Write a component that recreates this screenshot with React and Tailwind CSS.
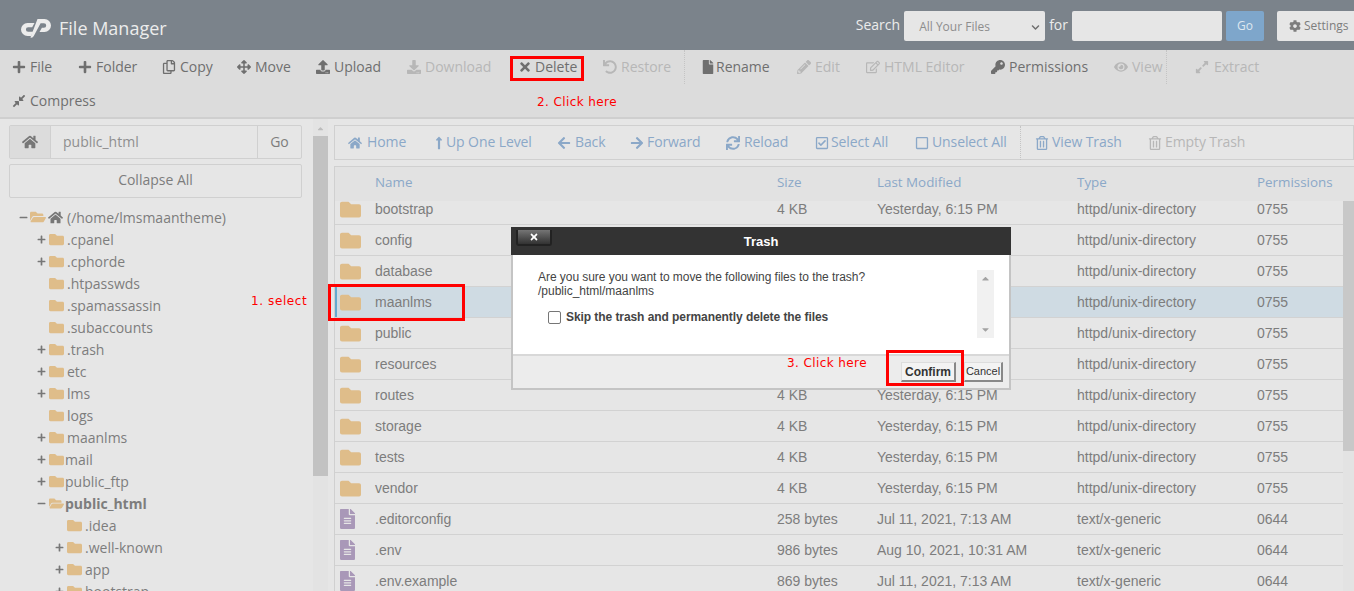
import React from "react";
import {
  FaPlus, FaMinus, FaRegCopy, FaArrowsAlt, FaUpload, FaDownload, FaTimes, FaUndo, FaFile, FaPencilAlt,
  FaRegEdit, FaKey, FaEye, FaExpandAlt, FaCompressAlt, FaHome, FaLongArrowAltUp, FaArrowLeft, FaArrowRight,
  FaSync, FaRegCheckSquare, FaRegSquare, FaRegTrashAlt, FaCog, FaFolder, FaFolderOpen, FaFileAlt,
  FaChevronDown, FaCaretUp, FaCaretDown,
} from "react-icons/fa";

const topActions = [
  { icon: FaPlus, label: "File", w: "w-[66px]" },
  { icon: FaPlus, label: "Folder", w: "w-[84px]" },
  { icon: FaRegCopy, label: "Copy", w: "w-[75px]" },
  { icon: FaArrowsAlt, label: "Move", w: "w-[79px]" },
  { icon: FaUpload, label: "Upload", w: "w-[91px]" },
  { icon: FaDownload, label: "Download", off: true, w: "w-[111px]" },
  { icon: FaTimes, label: "Delete", w: "w-[85px]", gap: "gap-[3px]" },
  { icon: FaUndo, label: "Restore", off: true, w: "w-[81px]" },
  { sep: true, gap: "mr-[16px]" },
  { icon: FaFile, label: "Rename", w: "w-[96px]", gap: "gap-px" },
  { icon: FaPencilAlt, label: "Edit", w: "w-[69px]", off: true },
  { icon: FaRegEdit, label: "HTML Editor", w: "w-[125px]", off: true },
  { icon: FaKey, label: "Permissions", w: "w-[123px]" },
  { icon: FaEye, label: "View", w: "w-[52px]", off: true },
  { sep: true, gap: "mr-[28px]" },
  { icon: FaExpandAlt, label: "Extract", w: "w-[90px]", off: true, gap: "gap-[5px]" },
];

const navActions = [
  { icon: FaHome, label: "Home", w: "w-[84px]", gap: "gap-[5px]" },
  { icon: FaLongArrowAltUp, label: "Up One Level", w: "w-[125px]", gap: "gap-0" },
  { icon: FaArrowLeft, label: "Back", w: "w-[73px]", gap: "gap-[4px]" },
  { icon: FaArrowRight, label: "Forward", w: "w-[96px]", gap: "gap-[3px]" },
  { icon: FaSync, label: "Reload", w: "w-[89px]" },
  { icon: FaRegCheckSquare, label: "Select All", w: "w-[100px]", gap: "gap-[2px]" },
  { icon: FaRegSquare, label: "Unselect All", w: "w-[105px]", gap: "gap-[3px]" },
  { sep: true, gap: "mr-[14px]" },
  { icon: FaRegTrashAlt, label: "View Trash", w: "w-[113px]", gap: "gap-[3px]" },
  { icon: FaRegTrashAlt, label: "Empty Trash", w: "w-[110px]", off: true, gap: "gap-[3px]" },
];

const tree = [
  { name: ".cpanel", depth: 1, toggle: "+" },
  { name: ".cphorde", depth: 1, toggle: "+" },
  { name: ".htpasswds", depth: 1 },
  { name: ".spamassassin", depth: 1 },
  { name: ".subaccounts", depth: 1 },
  { name: ".trash", depth: 1, toggle: "+" },
  { name: "etc", depth: 1, toggle: "+" },
  { name: "lms", depth: 1, toggle: "+" },
  { name: "logs", depth: 1 },
  { name: "maanlms", depth: 1, toggle: "+" },
  { name: "mail", depth: 1, toggle: "+", tight: true },
  { name: "public_ftp", depth: 1, toggle: "+", tight: true },
  { name: "public_html", depth: 1, toggle: "-", open: true, tight: true },
  { name: ".idea", depth: 2 },
  { name: ".well-known", depth: 2, toggle: "+" },
  { name: "app", depth: 2, toggle: "+" },
  { name: "bootstrap", depth: 2, toggle: "+" },
];

const dirs = ["bootstrap", "config", "database", "maanlms", "public", "resources", "routes", "storage", "tests", "vendor"];

const files = [
  { name: ".editorconfig", size: "258 bytes", date: "Jul 11, 2021, 7:13 AM" },
  { name: ".env", size: "986 bytes", date: "Aug 10, 2021, 10:31 AM" },
  { name: ".env.example", size: "869 bytes", date: "Jul 11, 2021, 7:13 AM" },
];

const rowGrid = "grid grid-cols-[40px_402px_100px_200px_180px_1fr] items-center";

function ActionButton({ item, dark }) {
  const Icon = item.icon;
  const colour = item.off ? "text-[#b7b7b7]" : dark ? "text-[#6f6f6f]" : "text-[#8ba8c8]";
  return (
    <div className={`flex items-center ${item.gap || "gap-[4px]"} h-[34px] ${item.w} ${colour}`}>
      <Icon className="text-[14px] shrink-0" />
      <span className="whitespace-nowrap pb-[2px]">{item.label}</span>
    </div>
  );
}

function TreeRow({ row }) {
  const pad = row.depth === 2 ? "pl-[46px]" : "pl-[28px]";
  const Folder = row.open ? FaFolderOpen : FaFolder;
  return (
    <div className={`flex items-center h-[22px] ${pad}`}>
      <span className="w-[12px] shrink-0 text-[#777]">
        {row.toggle === "+" && <FaPlus className="text-[9px]" />}
        {row.toggle === "-" && <FaMinus className="text-[9px]" />}
      </span>
      <Folder className="text-[15px] text-[#dfbd8a] shrink-0" />
      <span className={`${row.tight ? "ml-px" : "ml-[3px]"} whitespace-nowrap ${row.open ? "font-bold" : ""}`}>{row.name}</span>
    </div>
  );
}

function FileRow({ name, size, date, type, perm, isDir, selected }) {
  return (
    <div className={`${rowGrid} h-[31px] border-b border-[#d2d2d2] font-['Liberation_Sans',sans-serif] text-[14px] text-[#7d7d7d] ${selected ? "bg-[#cfdbe3] shadow-[inset_2px_0_0_#64a9cf]" : ""}`}>
      <span className="pl-[5px]">
        {isDir ? <FaFolder className="text-[21px] text-[#dfbd8a]" /> : <FaFileAlt className="w-[15px] h-[20px] text-[#a998b8]" />}
      </span>
      <span>{name}</span>
      <span>{size}</span>
      <span>{date}</span>
      <span>{type}</span>
      <span>{perm}</span>
    </div>
  );
}

function Logo() {
  return (
    <svg width="31" height="21" viewBox="0 0 31 21" className="shrink-0">
      <path d="M14.5 5H7.5a6.5 6.5 0 0 0 0 13h3.5l2.4-4.2H8.2a2.3 2.3 0 0 1 0-4.6h4Z" fill="#ececec" />
      <path d="M17.5 1H24.5a6.5 6.5 0 0 1 0 13h-5l2.4-4.2h2a2.3 2.3 0 0 0 0-4.6H20.6L13.8 18a3 3 0 0 1-3.4 1.5Z" fill="#ececec" />
    </svg>
  );
}

export default function App() {
  return (
    <div className="relative h-[591px] w-[1354px] overflow-hidden bg-[#e6e6e6] font-['Open_Sans',sans-serif] text-[14px] text-[#7d7d7d]">
      {/* header */}
      <header className="flex items-center justify-between h-[50px] bg-[#7b838b] pl-[20px]">
        <div className="flex items-center gap-[8px] pt-[6px]">
          <Logo />
          <span className="text-[18px] text-[#ececec]">File Manager</span>
        </div>
        <div className="flex items-center text-[14px] text-[#ececec] pt-[2px]">
          <span className="mr-[4px] -mt-[3px]">Search</span>
          <div className="flex items-center justify-between w-[141px] h-[30px] rounded-[2px] bg-[#e6e6e6] pl-[15px] pr-[5px] pt-[2px] text-[12px] text-[#8d8d8d]">
            All Your Files
            <FaChevronDown className="text-[9px] text-[#6e6e6e]" />
          </div>
          <span className="mx-[4px] -mt-[3px]">for</span>
          <div className="w-[150px] h-[30px] rounded-[2px] bg-[#e6e6e6]" />
          <div className="flex items-center justify-center ml-[4px] w-[38px] h-[30px] rounded-[2px] bg-[#7ea6cb] text-[12px] text-[#dfe8f0]">Go</div>
          <div className="flex items-center gap-[3px] ml-[13px] w-[77px] h-[30px] rounded-l-[2px] bg-[#e6e6e6] pl-[12px] text-[12px] text-[#7d7d7d]">
            <FaCog className="text-[12px] shrink-0" />
            Settings
          </div>
        </div>
      </header>

      {/* toolbar */}
      <div className="h-[69px] bg-[#dcdcdc] border-b-2 border-[#cfcfcf] pl-[12px]">
        <div className="flex items-center h-[34px]">
          {topActions.map((item, i) =>
            item.sep ? (
              <div key={i} className={`h-[34px] w-px ${item.gap} border-l border-dotted border-[#c4c4c4]`} />
            ) : (
              <ActionButton key={item.label} item={item} dark />
            )
          )}
        </div>
        <div className="flex items-center h-[34px]">
          <ActionButton item={{ icon: FaCompressAlt, label: "Compress", w: "w-[120px]" }} dark />
        </div>
      </div>

      <div className="flex h-[473px]">
        {/* left tree */}
        <aside className="w-[313px] shrink-0 pl-[9px] pr-[11px] pt-[6px]">
          <div className="flex h-[34px] border border-[#d0d0d0] rounded-[2px]">
            <div className="flex items-center justify-center w-[41px] bg-[#dcdcdc] border-r border-[#d0d0d0]">
              <FaHome className="text-[16px] text-[#777]" />
            </div>
            <div className="flex-1 flex items-center pl-[12px] pb-[2px] text-[#8f8f8f]">public_html</div>
            <div className="flex items-center justify-center w-[44px] pb-[2px] border-l border-[#d0d0d0]">Go</div>
          </div>
          <div className="flex items-center justify-center h-[34px] mt-[5px] pb-[3px] border border-[#d0d0d0] rounded-[2px]">Collapse All</div>
          <div className="mt-[8px]">
            <div className="flex items-center h-[22px] pl-[8px]">
              <FaMinus className="text-[9px] text-[#777] w-[13px] shrink-0" />
              <FaFolderOpen className="text-[16px] text-[#dfbd8a] shrink-0" />
              <FaHome className="text-[15px] text-[#777] ml-[2px] shrink-0" />
              <span className="ml-[4px] whitespace-nowrap">(/home/lmsmaantheme)</span>
            </div>
            {tree.map((row) => (
              <TreeRow key={row.name} row={row} />
            ))}
          </div>
        </aside>

        {/* tree scrollbar */}
        <div className="w-[15px] shrink-0 flex flex-col items-center bg-[#e3e3e3]">
          <FaCaretUp className="text-[9px] text-[#bdbdbd] mt-[5px] mb-[3px]" />
          <div className="w-full h-[340px] bg-[#c2c2c2]" />
        </div>

        {/* main */}
        <main className="flex-1 min-w-0 pl-[6px] pt-[6px]">
          <div className="flex items-center h-[35px] border border-[#d0d0d0] pl-[13px] tracking-[-0.1px]">
            {navActions.map((item, i) =>
              item.sep ? (
                <div key={i} className={`h-[34px] w-px ${item.gap} border-l border-dotted border-[#c4c4c4]`} />
              ) : (
                <ActionButton key={item.label} item={item} />
              )
            )}
          </div>
          <div className={`${rowGrid} h-[35px] mt-[6px] pb-[3px] border-t border-l border-[#d0d0d0] bg-[#e2e2e2] text-[#8ba8c8] text-[13.4px]`}>
            <span />
            <span>Name</span>
            <span>Size</span>
            <span>Last Modified</span>
            <span>Type</span>
            <span>Permissions</span>
          </div>
          <div className="flex h-[391px] overflow-hidden">
            <div className="flex-1 min-w-0 border-l border-[#d0d0d0] overflow-hidden">
              <div className="-mt-[7px]">
                {dirs.map((name) => (
                  <FileRow key={name} name={name} size="4 KB" date="Yesterday, 6:15 PM" type="httpd/unix-directory" perm="0755" isDir selected={name === "maanlms"} />
                ))}
                {files.map((f) => (
                  <FileRow key={f.name} {...f} type="text/x-generic" perm="0644" />
                ))}
              </div>
            </div>
            <div className="w-[11px] shrink-0 bg-[#e3e3e3]">
              <div className="h-[250px] bg-[#c8c8c8]" />
            </div>
          </div>
        </main>
      </div>

      {/* trash dialog */}
      <div className="absolute left-[511px] top-[227px] w-[500px] h-[163px] flex flex-col border-x-2 border-b-2 border-[#c4c4c4] bg-white font-['Liberation_Sans',sans-serif] text-[12px] text-[#444]">
        <div className="relative -mx-[2px] flex items-center justify-center h-[28px] pt-[1px] bg-[#333333] text-[13px] font-bold text-white">
          <div className="absolute left-[5px] top-[3px] flex items-center justify-center w-[36px] h-[16px] rounded-b-[3px] bg-gradient-to-b from-[#757575] to-[#333] border-b-2 border-x-2 border-[#222]">
            <FaTimes className="text-[10px] text-white" />
          </div>
          Trash
        </div>
        <div className="flex flex-1 pl-[25px] pr-[15px] pt-[15px]">
          <div className="flex-1">
            <p className="leading-[14px] tracking-[-0.05px]">Are you sure you want to move the following files to the trash?</p>
            <p className="leading-[14px]">/public_html/maanlms</p>
            <label className="flex items-center gap-[5px] mt-[10px] ml-[10px] font-bold tracking-[-0.07px]">
              <span className="block w-[13px] h-[13px] rounded-[2px] border border-[#767676] bg-white" />
              Skip the trash and permanently delete the files
            </label>
          </div>
          <div className="flex flex-col items-center justify-between w-[17px] h-[68px] bg-[#f1f1f1] py-[3px] text-[#a3a3a3]">
            <FaCaretUp className="text-[11px]" />
            <FaCaretDown className="text-[11px]" />
          </div>
        </div>
        <div className="flex items-start justify-end h-[34px] border-t-2 border-[#d8d8d8] bg-[#ececec] pt-[6px] pr-[6px] text-[11px]">
          <div className="flex items-center justify-center w-[55px] h-[20px] border border-[#ddd] border-b-2 border-r-2 border-r-[#888] border-b-[#888] bg-[#f3f3f3] text-[12px] font-bold text-[#333]">Confirm</div>
          <div className="flex items-center justify-center w-[39px] h-[20px] ml-[8px] border border-[#ddd] border-b-2 border-r-2 border-r-[#888] border-b-[#888] bg-[#f3f3f3] text-[#333]">Cancel</div>
        </div>
      </div>

      {/* tutorial annotations */}
      <div className="absolute left-[510px] top-[56px] w-[74px] h-[25px] border-[3px] border-[#ff0000]" />
      <div className="absolute left-[328px] top-[284px] w-[137px] h-[37px] border-[3px] border-[#ff0000]" />
      <div className="absolute left-[886px] top-[350px] w-[78px] h-[36px] border-[3px] border-[#ff0000]" />
      <span className="absolute left-[251px] top-[292px] font-['DejaVu_Sans',sans-serif] text-[12px] tracking-[0.6px] text-[#ff0000]">1. select</span>
      <span className="absolute left-[537px] top-[93px] font-['DejaVu_Sans',sans-serif] text-[12px] tracking-[0.4px] text-[#ff0000]">2. Click here</span>
      <span className="absolute left-[787px] top-[354px] font-['DejaVu_Sans',sans-serif] text-[12px] tracking-[0.4px] text-[#ff0000]">3. Click here</span>
    </div>
  );
}
